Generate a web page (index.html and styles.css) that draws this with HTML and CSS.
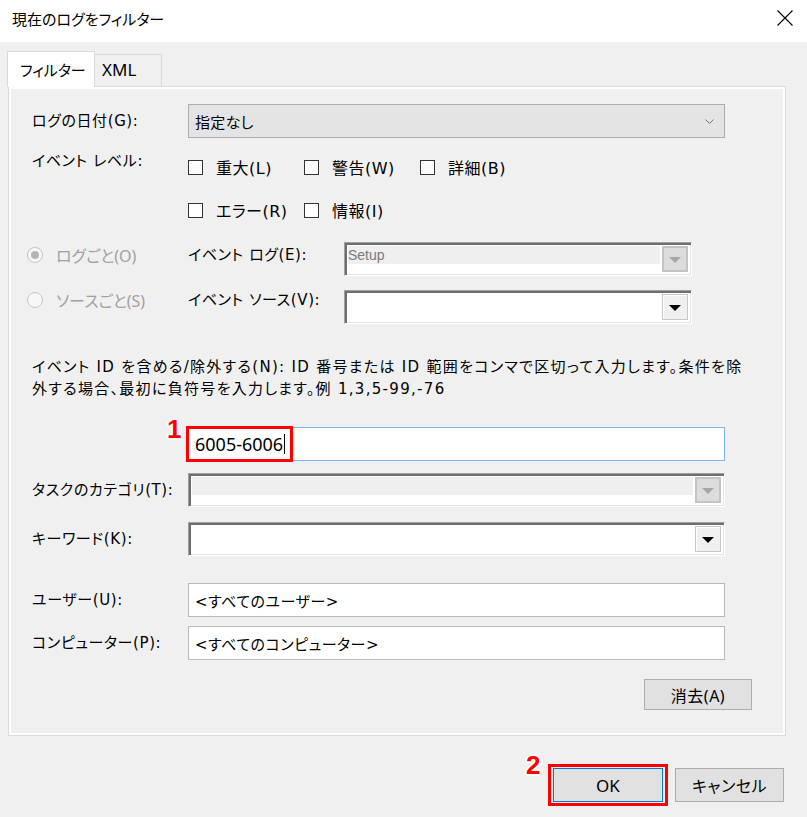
FILE: index.html
```html
<!DOCTYPE html>
<html lang="ja">
<head>
<meta charset="utf-8">
<title>現在のログをフィルター</title>
<link rel="stylesheet" href="styles.css">
</head>
<body>
<div class="window">
  <header class="titlebar">
    <span class="title">現在のログをフィルター</span>
    <svg class="close" width="16" height="16" viewBox="0 0 16 16"><path d="M0.5 0.5 L15.5 15.5 M15.5 0.5 L0.5 15.5" stroke="#000" stroke-width="1.1" fill="none"/></svg>
  </header>
  <div class="client">
    <div class="tabs">
      <div class="tab active">フィルター</div>
      <div class="tab">XML</div>
    </div>
    <div class="panel">
      <div class="row row-date">
        <span class="lbl">ログの日付(G):</span>
        <div class="select">
          <span>指定なし</span>
          <svg class="chev" width="9" height="5" viewBox="0 0 9 5"><path d="M0.5 0.5 L4.5 4.5 L8.5 0.5" stroke="#707070" stroke-width="1" fill="none"/></svg>
        </div>
      </div>
      <div class="row row-level">
        <span class="lbl lbl-level">イベント レベル:</span>
        <div class="checks">
          <label class="check"><span class="box"></span><span>重大(L)</span></label>
          <label class="check"><span class="box"></span><span>警告(W)</span></label>
          <label class="check"><span class="box"></span><span>詳細(B)</span></label>
          <label class="check"><span class="box"></span><span>エラー(R)</span></label>
          <label class="check"><span class="box"></span><span>情報(I)</span></label>
        </div>
      </div>
      <div class="row row-radio row-log">
        <div class="radio"><span class="circle checked"></span><span>ログごと(O)</span></div>
        <span class="lbl lbl-mid">イベント ログ(E):</span>
        <div class="combo small disabled">
          <div class="combo-text"><span>Setup</span></div>
          <span class="drop"><span class="tri"></span></span>
        </div>
      </div>
      <div class="row row-radio row-src">
        <div class="radio"><span class="circle"></span><span>ソースごと(S)</span></div>
        <span class="lbl lbl-mid">イベント ソース(V):</span>
        <div class="combo small">
          <div class="combo-text"></div>
          <span class="drop"><span class="tri"></span></span>
        </div>
      </div>
      <p class="desc">イベント ID を含める/除外する(N): ID 番号または ID 範囲をコンマで区切って入力します。条件を除<br>外する場合、最初に負符号を入力します。例 1,3,5-99,-76</p>
      <div class="row row-id">
        <span class="lbl"></span>
        <div class="input focus">
          <span class="idtext">6005-6006</span><span class="caret"></span>
          <span class="mark mark-1"></span>
          <span class="num num-1">1</span>
        </div>
      </div>
      <div class="row row-cat">
        <span class="lbl">タスクのカテゴリ(T):</span>
        <div class="combo wide disabled">
          <div class="combo-text"></div>
          <span class="drop"><span class="tri"></span></span>
        </div>
      </div>
      <div class="row row-key">
        <span class="lbl">キーワード(K):</span>
        <div class="combo wide">
          <div class="combo-text"></div>
          <span class="drop"><span class="tri"></span></span>
        </div>
      </div>
      <div class="row row-user">
        <span class="lbl">ユーザー(U):</span>
        <div class="field">&lt;すべてのユーザー&gt;</div>
      </div>
      <div class="row row-comp">
        <span class="lbl">コンピューター(P):</span>
        <div class="field">&lt;すべてのコンピューター&gt;</div>
      </div>
      <div class="row row-clear">
        <button class="btn btn-clear">消去(A)</button>
      </div>
    </div>
    <div class="footer">
      <div class="ok-wrap">
        <button class="btn btn-ok">OK</button>
        <span class="mark mark-2"></span>
        <span class="num num-2">2</span>
      </div>
      <button class="btn btn-cancel">キャンセル</button>
    </div>
  </div>
</div>
</body>
</html>
```

FILE: styles.css
```css
* { box-sizing: border-box; }
html, body { margin: 0; padding: 0; }
body {
  width: 807px;
  height: 817px;
  overflow: hidden;
  background: #f0f0f0;
  font-family: "Noto Sans", "Noto Sans CJK JP", sans-serif;
  font-feature-settings: "palt";
  color: #000;
}
.window { width: 807px; height: 817px; }

.titlebar {
  height: 42px;
  background: #fff;
  display: flex;
  align-items: center;
  justify-content: space-between;
  padding: 0 14px 0 12px;
}
.title { font-size: 15px; line-height: 20px; margin-top: -4px; }
.close { margin-top: -6px; }

.client { padding: 9px 0 0 0; }

.tabs { display: flex; align-items: flex-end; padding-left: 7px; height: 36px; position: relative; z-index: 1; margin-bottom: -1px; }
.tab {
  font-size: 15px;
  line-height: 20px;
}
.tab.active {
  width: 88px;
  height: 36px;
  background: #fff;
  border: 1px solid #d9d9d9;
  border-bottom: none;
  padding: 8px 0 0 12px;
}
.tab:not(.active) {
  width: 67px;
  height: 32px;
  background: #f0f0f0;
  border: 1px solid #d9d9d9;
  border-left: none;
  border-bottom: none;
  margin-bottom: 1px;
  padding: 5px 0 0 7px;
  font-size: 17px;
}

.panel {
  margin-left: 8px;
  width: 778px;
  height: 650px;
  background: #f0f0f0;
  border: 1px solid #dadada;
  box-shadow: inset 0 0 0 2px #fff;
  padding: 17px 33px 0 23px;
  display: flex;
  flex-direction: column;
}

.row { display: flex; align-items: center; }
.lbl {
  width: 156px;
  flex: none;
  font-family: "DejaVu Sans", "Noto Sans CJK JP", sans-serif;
  font-size: 15px;
  line-height: 20px;
  letter-spacing: 0.6px;
}

.select {
  width: 537px;
  height: 34px;
  background: #e4e4e4;
  border: 1px solid #adadad;
  display: flex;
  align-items: center;
  justify-content: space-between;
  padding: 0 10px 0 6px;
  font-size: 15px;
  letter-spacing: 0.3px;
}

.row-level { align-items: flex-start; margin-top: 14px; }
.lbl-level { margin-top: -1px; }
.checks { display: grid; grid-template-columns: 116px 116px auto; row-gap: 13px; }
.check {
  display: flex; align-items: center; height: 30px;
  font-family: "DejaVu Sans", "Noto Sans CJK JP", sans-serif;
  font-size: 16px;
  letter-spacing: 0.5px;
}
.box { width: 15px; height: 15px; border: 1px solid #333; background: #fff; margin-right: 13px; flex: none; }

.row-radio { margin-left: -5px; height: 34px; align-items: flex-start; }
.row-log { margin-top: 17px; }
.row-src { margin-top: 14px; }
.row-log .radio, .row-log .lbl-mid { margin-top: 3px; }
.row-src .radio, .row-src .lbl-mid { margin-top: 0; }
.radio { width: 161px; height: 20px; flex: none; display: flex; align-items: center; color: #a0a0a0; font-size: 16px; }
.circle {
  width: 16px; height: 16px; border-radius: 50%;
  border: 1px solid #c4c4c4; background: #f7f7f7;
  margin-right: 13px; flex: none;
  display: flex; align-items: center; justify-content: center;
}
.circle.checked::after { content: ""; width: 8px; height: 8px; border-radius: 50%; background: #b4b4b4; }
.lbl-mid { width: 156px; }

.combo {
  height: 34px;
  display: flex;
  align-items: stretch;
  border-top: 1px solid #a0a0a0;
  border-left: 1px solid #a0a0a0;
  border-right: 1px solid #fff;
  border-bottom: 1px solid #fff;
  box-shadow: inset 2px 2px 0 #6e6e6e, inset -1px -1px 0 #e3e3e3;
  background: #fff;
  padding: 3px;
  position: relative;
}
.combo.small { width: 348px; }
.combo.wide { width: 537px; }
.combo-text { flex: 1; font-size: 14px; font-family: "Liberation Sans", sans-serif; }
.combo.disabled .combo-text { background: linear-gradient(#efefef 0, #efefef 18px, #fff 18px); color: #7a7a7a; }
.combo.disabled .combo-text span { display: block; line-height: 18px; margin-top: 0; }
.drop {
  width: 26px;
  flex: none;
  margin-left: 2px;
  background: #f0f0f0;
  border: 1px solid #c6c6c6;
  box-shadow: inset 1px 1px 0 #fff;
  display: flex; align-items: center; justify-content: center;
}
.tri { width: 0; height: 0; border-left: 6px solid transparent; border-right: 6px solid transparent; border-top: 6px solid #000; margin-top: 2px; }
.combo.disabled .drop { background: #dcdcdc; border: 2px solid #c3c3c3; box-shadow: none; }
.combo.disabled .tri { border-top-color: #a6a6a6; }

.desc {
  margin: 32px 0 0 0;
  font-family: "DejaVu Sans", "Noto Sans CJK JP", sans-serif;
  font-size: 15px;
  line-height: 22px;
  letter-spacing: 1.3px;
  white-space: nowrap;
}

.row-id { margin-top: 27px; }
.input {
  width: 537px; height: 34px;
  background: #fff;
  border: 1px solid #7eb4ea;
  display: flex; align-items: center;
  padding-left: 6px;
  position: relative;
}
.idtext { font-size: 18px; line-height: 22px; }
.caret { width: 1px; height: 20px; background: #000; margin-left: 1px; }
.mark { position: absolute; border: 3px solid #ff0000; pointer-events: none; }
.mark-1 { left: -3px; top: -2px; width: 107px; height: 36px; }
.num {
  position: absolute;
  color: #ff0000;
  font-family: "Liberation Sans", sans-serif;
  font-weight: bold;
  font-size: 26px;
  line-height: 26px;
  text-shadow: -2px 0 #fff, 2px 0 #fff, 0 -2px #fff, 0 2px #fff, -1px -1px #fff, 1px 1px #fff, 1px -1px #fff, -1px 1px #fff;
}
.num-1 { left: -22px; top: -12px; }

.row-cat { margin-top: 12px; }
.row-key { margin-top: 15px; }
.row-user { margin-top: 27px; }
.row-comp { margin-top: 9px; }
.field {
  width: 537px; height: 34px;
  background: #fff;
  border: 1px solid #b9b9b9;
  display: flex; align-items: center;
  padding-left: 6px;
  font-family: "DejaVu Sans", "Noto Sans CJK JP", sans-serif;
  font-size: 15px;
  letter-spacing: 0.5px;
}

.row-clear { margin-top: 19px; justify-content: flex-end; }
.btn {
  font-family: "Noto Sans", "Noto Sans CJK JP", sans-serif;
  font-feature-settings: "palt";
  font-size: 16px;
  color: #000;
  background: #e1e1e1;
  border: 1px solid #adadad;
  padding: 0;
  margin: 0;
}
.btn-clear { width: 108px; height: 31px; letter-spacing: 0.5px; }

.footer { display: flex; justify-content: flex-end; gap: 12px; margin-top: 32px; padding-right: 23px; }
.ok-wrap { position: relative; }
.btn-ok { width: 110px; height: 34px; border: 1px solid #0078d7; display: block; font-size: 17px; }
.btn-cancel { width: 109px; height: 34px; letter-spacing: 0.5px; }
.mark-2 { left: -5px; top: -4px; width: 120px; height: 42px; }
.num-2 { left: -27px; top: -16px; }
```
